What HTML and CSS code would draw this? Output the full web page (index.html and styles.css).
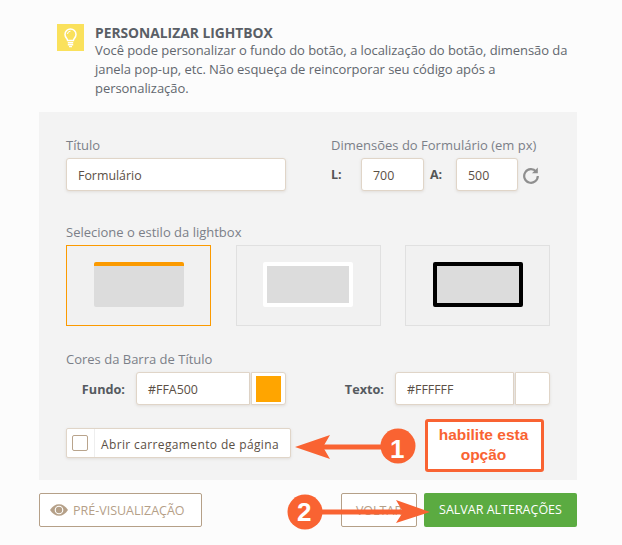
FILE: index.html
```html
<!DOCTYPE html>
<html lang="pt">
<head>
<meta charset="utf-8">
<title>Personalizar Lightbox</title>
<link rel="stylesheet" href="styles.css">
</head>
<body>
<div class="page">
  <header class="head">
    <div class="bulb">
      <svg width="15" height="20" viewBox="0 0 15 20"><path d="M4.600 12.600c0-2-2.600-3-2.600-6.200A5.500 5.500 0 0 1 7.500 1 5.500 5.500 0 0 1 13 6.400c0 3.200-2.600 4.200-2.600 6.200z" fill="none" stroke="#fff" stroke-width="1.500"/><path d="M7.500 3.200A3 3 0 0 0 4.500 6" fill="none" stroke="#fff" stroke-width="1"/><path d="M4.800 14h5.400v1.400H4.800zM4.800 16h5.400v1.400H4.800zM6 18h3v1.200H6z" fill="#fff"/></svg>
    </div>
    <div class="intro">
      <h1>PERSONALIZAR LIGHTBOX</h1>
      <p>Você pode personalizar o fundo do botão, a localização do botão, dimensão da janela pop-up, etc. Não esqueça de reincorporar seu código após a personalização.</p>
    </div>
  </header>

  <section class="panel">
    <div class="row-top">
      <div class="col-title">
        <div class="label">Título</div>
        <div class="field f-title">Formulário</div>
      </div>
      <div class="col-dim">
        <div class="label">Dimensões do Formulário (em px)</div>
        <div class="dims">
          <b class="dim-l">L:</b>
          <div class="field f-l">700</div>
          <b class="dim-a">A:</b>
          <div class="field f-a">500</div>
          <svg class="reset" width="18" height="18" viewBox="0 0 18 18"><path d="M14.200 5.600A6.800 6.800 0 1 0 15.800 10" fill="none" stroke="#8f8f8f" stroke-width="2.200"/><path d="M15.800 1.500v5.800H10z" fill="#8f8f8f"/></svg>
        </div>
      </div>
    </div>

    <div class="label label-style">Selecione o estilo da lightbox</div>
    <div class="tiles">
      <div class="tile tile-on"><div class="shot shot-a"></div></div>
      <div class="tile tile-mid"><div class="shot shot-b"></div></div>
      <div class="tile"><div class="shot shot-c"></div></div>
    </div>

    <div class="label label-colors">Cores da Barra de Título</div>
    <div class="colors">
      <b class="c-label c-fundo">Fundo:</b>
      <div class="field f-c1">#FFA500</div>
      <div class="swatch"><span class="chip"></span></div>
      <b class="c-label c-texto">Texto:</b>
      <div class="field f-c2">#FFFFFF</div>
      <div class="swatch"></div>
    </div>

    <div class="check">
      <span class="check-cell"><span class="box"></span></span>
      <span class="check-text">Abrir carregamento de página</span>
    </div>
  </section>

  <footer class="actions">
    <div class="btn btn-prev">
      <svg width="18" height="12" viewBox="0 0 18 12"><path d="M0 6C2.500 2.200 5.500.2 9 .2S15.500 2.200 18 6c-2.500 3.800-5.500 5.800-9 5.800S2.500 9.800 0 6z" fill="#b5a088"/><circle cx="9" cy="6" r="4.300" fill="#fff"/><circle cx="9" cy="6" r="3.200" fill="#b5a088"/></svg>
      <span>PRÉ-VISUALIZAÇÃO</span>
    </div>
    <div class="btn btn-back">VOLTAR</div>
    <div class="btn btn-save">SALVAR ALTERAÇÕES</div>
  </footer>

  <svg class="marks" width="622" height="545" viewBox="0 0 622 545">
    <path d="M323 444.500h60v5h-60z" fill="#f96332"/>
    <path d="M295 447l35-12-7 12 7 12z" fill="#f96332"/>
    <circle cx="398" cy="446" r="17.500" fill="#f96332"/>
    <path d="M320 509.500h88v5h-88z" fill="#f96332"/>
    <path d="M430 512l-34-12 7 12-7 11z" fill="#f96332"/>
    <circle cx="305" cy="512" r="17.500" fill="#f96332"/>
  </svg>
  <span class="num num-1">1</span>
  <span class="num num-2">2</span>
  <div class="note">habilite esta<br>opção</div>
</div>
</body>
</html>
```
FILE: styles.css
```css
* { box-sizing: border-box; }
html, body { margin: 0; padding: 0; }
body {
  background: #fcfcfc;
  font-family: "Open Sans", "Noto Sans", sans-serif;
  font-size: 13px;
  color: #5a5f66;
  overflow: hidden;
}
.page { position: relative; width: 622px; height: 545px; }

.head { display: flex; padding: 24px 40px 0 57px; height: 112px; }
.bulb {
  width: 27px; height: 27px; background: #fae15c;
  display: flex; align-items: center; justify-content: center;
  flex: none; margin-right: 11px;
}
.intro h1 { margin: 0; font-size: 13.800px; line-height: 17px; font-weight: 700; color: #5a5f66; }
.intro p { margin: 0; font-size: 13px; line-height: 19px; color: #62676e; letter-spacing: -.055px; }

.panel {
  margin-left: 39px; width: 538px; height: 368px;
  background: #f3f3f3; padding: 24px 27px 0;
}
.label { font-size: 13px; line-height: 18px; color: #7b7f88; }
.row-top { display: flex; }
.col-title { width: 265px; }
.field {
  height: 33px; line-height: 33px;
  background: #fff; border: 1px solid #e0d5c8; border-radius: 3px;
  box-shadow: 0 1px 3px rgba(120, 100, 80, .15);
  color: #5b4f45; font-size: 12.400px; padding-left: 11px;
}
.f-title { width: 220px; margin-top: 4px; }
.dims { display: flex; align-items: center; margin-top: 4px; }
.dims b { font-size: 12.500px; color: #555; }
.dim-l { width: 30px; }
.dim-a { width: 26px; margin-left: 6px; }
.f-l { width: 63px; }
.f-a { width: 62px; }
.reset { margin-left: 4px; }

.label-style { margin-top: 32px; }
.tiles { display: flex; margin-top: 4px; }
.tile {
  width: 145px; height: 81px; margin-right: 25px; flex: none;
  background: #f1f1f1; border: 1px solid #e0e0e0;
  display: flex; justify-content: center; padding-top: 16px;
}
.tile:last-child { margin-right: 0; margin-left: -1px; }
.tile-on { border-color: #fb9a00; }
.tile-mid { justify-content: flex-start; padding-left: 26px; }
.shot { width: 90px; height: 45px; background: #dcdcdc; border-radius: 2px; }
.shot-a { border-top: 4px solid #fb9a00; }
.shot-b { border: 4px solid #fff; }
.shot-c { border: 4px solid #000; }

.label-colors { margin-top: 24px; }
.colors { display: flex; align-items: center; margin-top: 4px; }
.c-label { font-size: 12.700px; color: #555a60; text-align: right; }
.c-fundo { width: 59px; margin-right: 11px; }
.c-texto { width: 98px; margin-right: 11px; }
.f-c1 { width: 114px; border-radius: 3px 0 0 3px; line-height: 34px; }
.f-c2 { width: 119px; border-radius: 3px 0 0 3px; line-height: 34px; }
.swatch {
  width: 35px; height: 33px; margin-left: 1px;
  background: #fff; border: 1px solid #e0d5c8; border-radius: 0 3px 3px 0;
  box-shadow: 0 1px 3px rgba(120, 100, 80, .15);
  display: flex; align-items: center; justify-content: center;
}
.chip { width: 25px; height: 26px; background: #ffa500; }

.check {
  display: flex; width: 225px; height: 30px; margin-top: 23px;
  background: #fff; border: 1px solid #e0d5c8; border-radius: 2px;
  box-shadow: 0 1px 3px rgba(120, 100, 80, .15);
}
.check-cell {
  width: 28px; flex: none; border-right: 1px solid #eee;
  display: flex; align-items: center; justify-content: center;
}
.box { width: 16px; height: 16px; border: 1px solid #b9a48c; border-radius: 2px; margin-left: -1px; }
.check-text { padding-left: 6px; font-size: 12px; line-height: 31px; color: #5b4f45; letter-spacing: .37px; white-space: nowrap; }

.actions { display: flex; padding: 13px 0 0 39px; }
.btn {
  height: 34px; line-height: 33px; font-size: 12.500px; text-align: center;
  border-radius: 2px; white-space: nowrap;
}
.btn-prev {
  width: 163px; background: #fff; border: 1px solid #b5a088; color: #b5a088;
  display: flex; align-items: center; gap: 5px; padding-left: 10px;
  margin-right: 139px;
}
.btn-back { width: 76px; background: #fff; border: 1px solid #b5a088; color: #b5a088; margin-right: 7px; }
.btn-save { width: 153px; background: #5bab41; color: #fff; line-height: 34px; }

.marks { position: absolute; left: 0; top: 0; }
.num {
  position: absolute; font-family: "Liberation Sans", Arial, sans-serif;
  font-weight: 700; font-size: 26px; line-height: 28px; color: #fff;
}
.num-1 { left: 390px; top: 435px; }
.num-2 { left: 297px; top: 498px; }
.note {
  position: absolute; left: 425px; top: 419px; width: 119px; height: 53px;
  background: #fff; border: 3px solid #f96332; border-radius: 3px;
  color: #f96332; font-family: "Liberation Sans", Arial, sans-serif;
  font-weight: 700; font-size: 15.500px; line-height: 20px; text-align: center;
  padding: 3px 2px 0 0;
}
```
